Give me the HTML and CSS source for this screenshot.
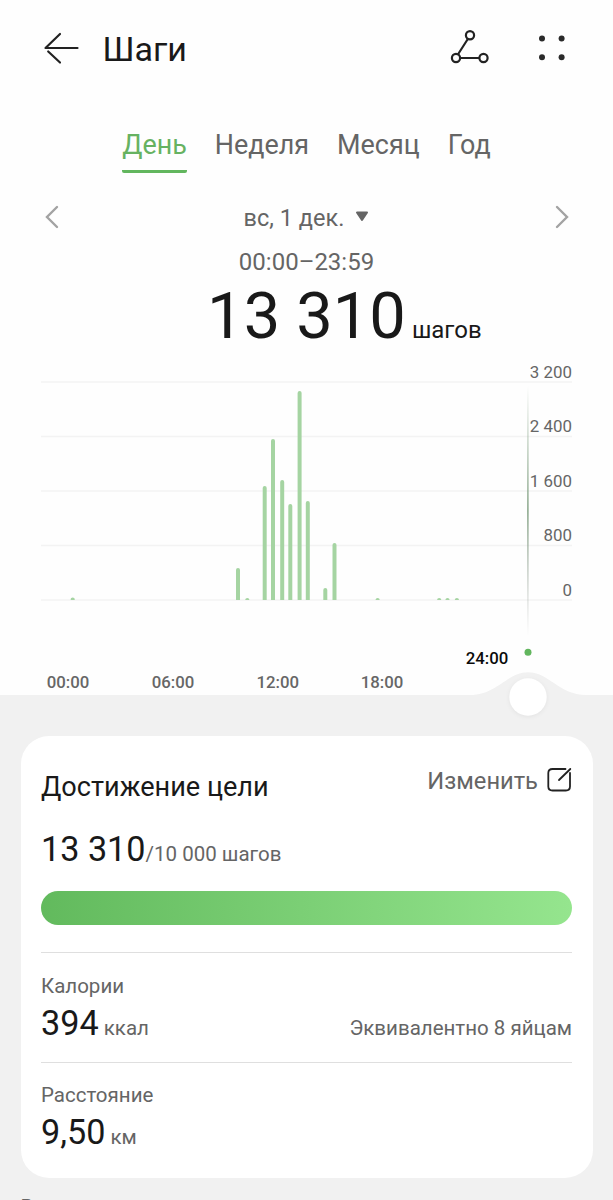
FILE: index.html
```
<!DOCTYPE html>
<html lang="ru">
<head>
  <meta charset="UTF-8" />
  <title>Шаги</title>
  <link rel="stylesheet" href="styles.css">
</head>
<body>

  <header class="top-bar">
    <svg class="icon-back" width="36" height="34" viewBox="0 0 36 34">
      <path d="M17 3 L2.500 17 H34.500 M5.200 20.500 L17 31.500" />
    </svg>
    <h1>Шаги</h1>
    <svg class="icon-track" width="40" height="36" viewBox="0 0 40 36">
      <path d="M17.500 9.500 L8.200 24 M11 28 H29" />
      <circle cx="20" cy="5.300" r="4.100" />
      <circle cx="6" cy="28" r="4.100" />
      <circle cx="33.500" cy="28" r="4.100" />
    </svg>
    <svg class="icon-menu" width="28" height="26" viewBox="0 0 28 26">
      <circle cx="4" cy="3.500" r="3" />
      <circle cx="23.600" cy="3.500" r="3" />
      <circle cx="4" cy="22.200" r="3" />
      <circle cx="23.600" cy="22.200" r="3" />
    </svg>
  </header>

  <nav class="tabs">
    <a class="tab active">День</a>
    <a class="tab">Неделя</a>
    <a class="tab">Месяц</a>
    <a class="tab">Год</a>
  </nav>

  <div class="date-row">
    <svg class="chevron" width="14" height="24" viewBox="0 0 14 24"><path d="M12 2 L2 12 L12 22" /></svg>
    <div class="date">
      <span>вс, 1 дек.</span>
      <svg width="14" height="12" viewBox="0 0 14 12"><path d="M2 1.500 H12 L7 9 Z" /></svg>
    </div>
    <svg class="chevron" width="14" height="24" viewBox="0 0 14 24"><path d="M2 2 L12 12 L2 22" /></svg>
  </div>
  <div class="period">00:00–23:59</div>
  <div class="total">
    <span class="total-value">13 310</span>
    <span class="total-unit">шагов</span>
  </div>

  <svg class="chart" width="613" height="386" viewBox="0 350 613 386">
    <defs>
      <linearGradient id="cursor" x1="0" y1="0" x2="0" y2="1">
        <stop offset="0" stop-color="#7f9f80" stop-opacity="0" />
        <stop offset="0.5" stop-color="#7f9f80" />
        <stop offset="1" stop-color="#9f9f9f" stop-opacity="0" />
      </linearGradient>
    </defs>

    <g class="grid">
      <path d="M41 382 H572 M41 436.500 H572 M41 491 H572 M41 545.500 H572 M41 600 H572" />
    </g>

    <g class="bars">
      <path d="M70.700 600 v-1 q0 -1.500 2 -1.500 t2 1.500 v1 Z" />
      <path d="M236 600 V570 a2 2 0 0 1 4 0 V600 Z" />
      <path d="M245.300 600 v-.5 q0 -1.500 2 -1.500 t2 1.500 v.5 Z" />
      <path d="M262.700 600 V488 a2 2 0 0 1 4 0 V600 Z" />
      <path d="M271 600 V441 a2 2 0 0 1 4 0 V600 Z" />
      <path d="M280.200 600 V482 a2 2 0 0 1 4 0 V600 Z" />
      <path d="M288.300 600 V506 a2 2 0 0 1 4 0 V600 Z" />
      <path d="M297.600 600 V393 a2 2 0 0 1 4 0 V600 Z" />
      <path d="M305.800 600 V503 a2 2 0 0 1 4 0 V600 Z" />
      <path d="M323.300 600 V590 a2 2 0 0 1 4 0 V600 Z" />
      <path d="M332.500 600 V545 a2 2 0 0 1 4 0 V600 Z" />
      <path d="M375.600 600 v-.5 q0 -1.500 2 -1.500 t2 1.500 v.5 Z" />
      <path d="M437.200 600 v-.5 q0 -1.500 2 -1.500 t2 1.500 v.5 Z" />
      <path d="M445.500 600 v-.5 q0 -1.500 2 -1.500 t2 1.500 v.5 Z" />
      <path d="M454.900 600 v-.5 q0 -1.500 2 -1.500 t2 1.500 v.5 Z" />
    </g>

    <rect x="527.200" y="386" width="1.400" height="250" fill="url(#cursor)" />

    <g class="y-labels">
      <text x="572" y="377.600">3 200</text>
      <text x="572" y="432">2 400</text>
      <text x="572" y="486.600">1 600</text>
      <text x="572" y="541">800</text>
      <text x="572" y="595.600">0</text>
    </g>

    <g class="x-labels">
      <text x="68" y="687.700">00:00</text>
      <text x="173" y="687.700">06:00</text>
      <text x="277.700" y="687.700">12:00</text>
      <text x="382" y="687.700">18:00</text>
      <text class="current" x="487" y="664">24:00</text>
    </g>

    <!-- slider under the chart -->
    <path class="wave" d="M0 695 H470 C497 695 507 672.300 528 672.300 S559 695 586 695 H613 V736 H0 Z" />
    <circle class="marker" cx="528" cy="652.200" r="3.500" />
    <circle class="knob" cx="528" cy="697" r="18.700" />
  </svg>

  <main class="details">
    <section class="card">
      <div class="card-head">
        <h2>Достижение цели</h2>
        <div class="edit">
          <span>Изменить</span>
          <svg width="26" height="26" viewBox="0 0 26 26">
            <path d="M19.500 2 H6.500 Q2.300 2 2.300 6 V19.500 Q2.300 23.500 6.500 23.500 H19.800 Q24 23.500 24 19.500 V6 M13 13 L24.300 2" />
          </svg>
        </div>
      </div>
      <div class="value goal">13 310<small>/10 000 шагов</small></div>
      <div class="progress"></div>
      <div class="metric">
        <div class="label">Калории</div>
        <div class="metric-row">
          <div class="value">394<small> ккал</small></div>
          <div class="note">Эквивалентно 8 яйцам</div>
        </div>
      </div>
      <div class="metric">
        <div class="label">Расстояние</div>
        <div class="metric-row">
          <div class="value">9,50<small> км</small></div>
        </div>
      </div>
    </section>
    <div class="next-title">В</div>
  </main>

</body>
</html>
```
FILE: styles.css
```
* {
  box-sizing: border-box;
}

body {
  margin: 0;
  width: 613px;
  height: 1200px;
  overflow: hidden;
  font-family: Roboto, "Noto Sans", sans-serif;
  background: #fefefe;
  color: #191919;
}

h1, h2 {
  margin: 0;
  font-weight: 400;
}

svg {
  display: block;
  flex: none;
}

.top-bar {
  display: flex;
  align-items: center;
  height: 98px;
  padding: 0 47px 2px 42.5px;
}

.top-bar h1 {
  flex: 1;
  padding: 2px 0 0 24px;
  font-size: 34px;
  line-height: 40px;
}

.icon-back, .icon-track {
  fill: none;
  stroke: #222;
  stroke-width: 2.2;
  stroke-linecap: round;
  stroke-linejoin: round;
}

.icon-track {
  margin-right: 48px;
}

.icon-menu {
  fill: #2a2a2a;
}

.tabs {
  display: flex;
  justify-content: center;
  gap: 28px;
  height: 95px;
  padding-top: 27px;
}

.tab {
  height: 47.5px;
  font-size: 26.9px;
  line-height: 40px;
  color: #656565;
}

.tab.active {
  color: #66b261;
  border-bottom: 3.5px solid #62b65e;
  border-radius: 2px;
}

.date-row {
  display: flex;
  align-items: center;
  justify-content: space-between;
  height: 48px;
  padding: 0 44.5px;
}

.chevron {
  fill: none;
  stroke: #a3a3a3;
  stroke-width: 2.4;
  stroke-linecap: round;
}

.date {
  display: flex;
  align-items: center;
  gap: 11px;
  font-size: 23.5px;
  line-height: 48px;
  color: #656565;
}

.date span {
  padding-top: 2px;
}

.date svg {
  fill: #656565;
  stroke: #656565;
  stroke-width: 2;
  stroke-linejoin: round;
}

.period {
  height: 40px;
  font-size: 24px;
  line-height: 43px;
  text-align: center;
  color: #656565;
}

.total {
  display: grid;
  grid-template-columns: 1fr auto 1fr;
  align-items: baseline;
  height: 69px;
  line-height: 70px;
}

.total-value {
  grid-column: 2;
  font-size: 65px;
}

.total-unit {
  padding-left: 6px;
  font-size: 24px;
}

.grid path {
  stroke: #f3f3f3;
  stroke-width: 1.5;
}

.bars {
  fill: #a5d4a2;
}

.y-labels {
  font-size: 16.9px;
  text-anchor: end;
  fill: #666;
}

.x-labels {
  font-size: 16.8px;
  font-weight: 500;
  text-anchor: middle;
  fill: #666;
}

.x-labels .current {
  fill: #0a0a0a;
}

.wave {
  fill: #f1f1f1;
}

.marker {
  fill: #62b65e;
}

.knob {
  fill: #fff;
  filter: drop-shadow(0 1px 2px rgba(0, 0, 0, 0.06));
}

.details {
  height: 464px;
  padding: 0 20.5px;
  background: #f1f1f1;
}

.card {
  height: 442px;
  padding: 0 20.5px;
  border-radius: 28px;
  background: #fff;
}

.card-head {
  display: flex;
  justify-content: space-between;
  height: 93px;
}

.card-head h2 {
  padding-top: 31px;
  font-size: 27.1px;
  line-height: 40px;
}

.edit {
  display: flex;
  align-items: center;
  gap: 8px;
  height: 90px;
  font-size: 23.7px;
  color: #656565;
}

.edit svg {
  margin-top: -3px;
  fill: none;
  stroke: #222;
  stroke-width: 1.8;
  stroke-linecap: round;
}

.value {
  font-size: 34.2px;
  line-height: 40px;
}

.value small {
  font-size: 20.5px;
  color: #656565;
}

.goal {
  height: 62px;
}

.progress {
  height: 34px;
  margin-bottom: 27px;
  border-radius: 17px;
  background: linear-gradient(90deg, #62ba5d, #95e58e);
}

.metric {
  height: 109.5px;
  padding-top: 19.5px;
  border-top: 1px solid #dfdfdf;
}

.label {
  height: 30px;
  font-size: 20.5px;
  line-height: 26px;
  color: #656565;
}

.metric-row {
  display: flex;
  align-items: baseline;
  justify-content: space-between;
}

.note {
  font-size: 20.5px;
  color: #656565;
}

.next-title {
  padding-top: 16px;
  font-size: 20.5px;
  line-height: 26px;
  color: #656565;
}
```
